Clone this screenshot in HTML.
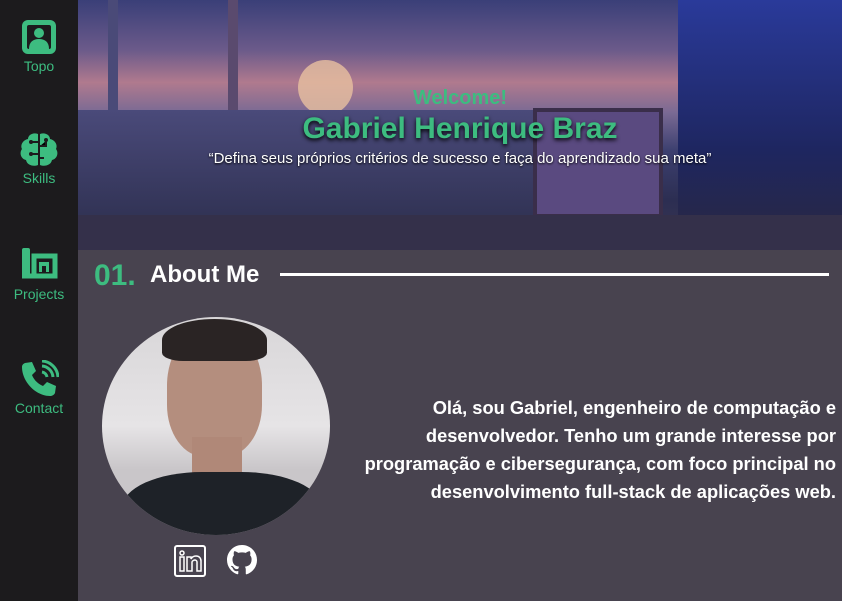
<!DOCTYPE html>
<html><head><meta charset="utf-8"><style>
*{margin:0;padding:0;box-sizing:border-box}
body{width:842px;height:601px;overflow:hidden;background:#48434f;font-family:"Liberation Sans",sans-serif;position:relative}
.side{position:absolute;left:0;top:0;width:78px;height:601px;background:#1c1b1d}
.nav{position:absolute;left:0;width:78px;text-align:center;color:#3dbc80;font-size:14px}
.nav svg{display:block;margin:0 auto 2px}
.hero{position:absolute;left:78px;top:0;width:764px;height:250px;overflow:hidden;
background:linear-gradient(180deg,#3a3f78 0%,#6b5a8a 20%,#b07a8e 33%,#7a6a94 45%,#3d4070 60%,#2c2e52 80%,#3a3650 100%)}
.t{position:absolute;width:100%;text-align:center}
.p{position:absolute;right:6px;top:394px;text-align:right;color:#fff;font-weight:bold;font-size:18.3px;line-height:28px;white-space:nowrap}
</style></head><body>
<div class="side">
 <div class="nav" style="top:18px"><svg width="38" height="38" viewBox="0 0 38 38"><rect x="2" y="2" width="34" height="34" rx="6" fill="#3dbc80"/><rect x="7" y="7" width="24" height="24" rx="2" fill="#1c1b1d"/><circle cx="19" cy="15" r="5" fill="#3dbc80"/><path d="M9 31c0-7 4-10 10-10s10 3 10 10z" fill="#3dbc80"/></svg>Topo</div>
 <div class="nav" style="top:132px"><svg width="40" height="36" viewBox="0 0 40 36"><path d="M19 2c-5-2-10 1-10 5-5 1-8 6-6 10-3 4-1 10 4 11 1 5 7 7 12 5z" fill="#3dbc80"/><path d="M21 2c5-2 10 1 10 5 5 1 8 6 6 10 3 4 1 10-4 11-1 5-7 7-12 5z" fill="#3dbc80"/><path d="M19 10h-6M19 22h-6M21 14h6v-5M21 26h4" stroke="#1c1b1d" stroke-width="2"/><circle cx="12" cy="10" r="2" fill="#1c1b1d"/><circle cx="12" cy="22" r="2" fill="#1c1b1d"/><circle cx="27" cy="8" r="2" fill="#1c1b1d"/></svg>Skills</div>
 <div class="nav" style="top:246px"><svg width="40" height="38" viewBox="0 0 40 38"><rect x="3" y="2" width="8" height="30" rx="2" fill="#3dbc80"/><path d="M3 30h33V10H15v20" fill="none" stroke="#3dbc80" stroke-width="5"/><path d="M20 16h10v10h-3v-6h-4v6h-3z" fill="#3dbc80"/></svg>Projects</div>
 <div class="nav" style="top:360px"><svg width="40" height="38" viewBox="0 0 40 38"><path d="M6 3l7-1 4 9-4 4c2 5 6 9 11 11l4-4 9 4-1 7c-1 2-3 3-5 3C17 36 3 22 3 7c0-2 1-3 3-4z" fill="#3dbc80"/><path d="M23 12a6 6 0 0 1 5 5M23 6a12 12 0 0 1 11 11M23 1a17 17 0 0 1 16 16" stroke="#3dbc80" stroke-width="3" fill="none"/></svg>Contact</div>
</div>
<div class="hero">
 <div style="position:absolute;left:30px;top:0;width:10px;height:250px;background:#4a4a78"></div>
 <div style="position:absolute;left:150px;top:0;width:10px;height:250px;background:#5a4a6e"></div>
 <div style="position:absolute;left:220px;top:60px;width:55px;height:55px;border-radius:50%;background:#e8c0a0;opacity:.8"></div>
 <div style="position:absolute;left:0;top:110px;width:460px;height:140px;background:linear-gradient(#4a4a7a,#2a2c4a)"></div>
 <div style="position:absolute;left:455px;top:108px;width:130px;height:110px;background:#5a4a80;border:4px solid #3a2e4a"></div>
 <div style="position:absolute;left:600px;top:0;width:164px;height:250px;background:linear-gradient(180deg,#2a3a9a,#1e2660 60%,#2a2840)"></div>
 <div style="position:absolute;left:0;top:215px;width:764px;height:35px;background:#34304a"></div>
 <div class="t" style="top:87px;color:#3dbc80;font-weight:bold;font-size:20px">Welcome!</div>
 <div class="t" style="top:112px;color:#3dbc80;font-weight:bold;font-size:30px;text-shadow:0 2px 4px #000">Gabriel Henrique Braz</div>
 <div class="t" style="top:150px;color:#fff;font-size:15px;text-shadow:0 1px 2px #000">“Defina seus próprios critérios de sucesso e faça do aprendizado sua meta”</div>
</div>
<div style="position:absolute;left:94px;top:259px;color:#3dbc80;font-weight:bold;font-size:30px">01.</div>
<div style="position:absolute;left:150px;top:261px;color:#fff;font-weight:bold;font-size:24px">About Me</div>
<div style="position:absolute;left:280px;top:273px;width:549px;height:3px;background:#fff"></div>
<div style="position:absolute;left:102px;top:317px;width:228px;height:218px;border-radius:50%;overflow:hidden;background:linear-gradient(#d8d6d8 0%,#e6e4e6 50%,#c9c6c9 70%)">
 <div style="position:absolute;left:65px;top:10px;width:95px;height:130px;border-radius:45% 45% 40% 40%;background:#b48e7e"></div>
 <div style="position:absolute;left:60px;top:2px;width:105px;height:42px;border-radius:50% 50% 20% 20%;background:#2a2424"></div>
 <div style="position:absolute;left:90px;top:120px;width:50px;height:50px;background:#b08878"></div>
 <div style="position:absolute;left:20px;top:155px;width:200px;height:90px;border-radius:40% 40% 0 0;background:#1e2228"></div>
</div>
<svg style="position:absolute;left:174px;top:545px" width="32" height="32" viewBox="0 0 32 32"><rect x="1" y="1" width="30" height="30" rx="2" fill="none" stroke="#fff" stroke-width="2"/><rect x="6" y="12" width="4" height="14" fill="none" stroke="#fff" stroke-width="1.5"/><circle cx="8" cy="8" r="2" fill="none" stroke="#fff" stroke-width="1.5"/><path d="M13 26V12h4v2c1-2 3-3 5-3 3 0 5 2 5 5v10h-4v-9c0-1-1-2-2-2s-3 1-3 2v9z" fill="none" stroke="#fff" stroke-width="1.5"/></svg>
<svg style="position:absolute;left:227px;top:545px" width="30" height="30" viewBox="0 0 16 16"><path fill="#fff" d="M8 0C3.58 0 0 3.58 0 8c0 3.540 2.29 6.53 5.47 7.59.4.07.55-.17.55-.38v-1.33c-2.23.48-2.7-1.070-2.7-1.07-.36-.92-.89-1.17-.89-1.17-.73-.5.06-.49.06-.49.8.06 1.23.83 1.23.83.71 1.22 1.87.87 2.33.66.07-.52.28-.87.51-1.07-1.78-.2-3.64-.89-3.64-3.95 0-.87.31-1.59.82-2.15-.08-.2-.36-1.02.08-2.12 0 0 .67-.21 2.2.82.64-.18 1.320-.27 2-.27.68 0 1.36.09 2 .27 1.53-1.04 2.2-.82 2.2-.82.44 1.1.16 1.92.08 2.12.51.56.82 1.27.82 2.15 0 3.07-1.870 3.75-3.65 3.95.29.25.54.73.54 1.48v2.2c0 .21.15.46.55.38A8.013 8.013 0 0016 8c0-4.42-3.58-8-8-8z"/></svg>
<div class="p">Olá, sou Gabriel, engenheiro de computação e<br>desenvolvedor. Tenho um grande interesse por<br>programação e cibersegurança, com foco principal no<br>desenvolvimento full-stack de aplicações web.</div>
</body></html>
